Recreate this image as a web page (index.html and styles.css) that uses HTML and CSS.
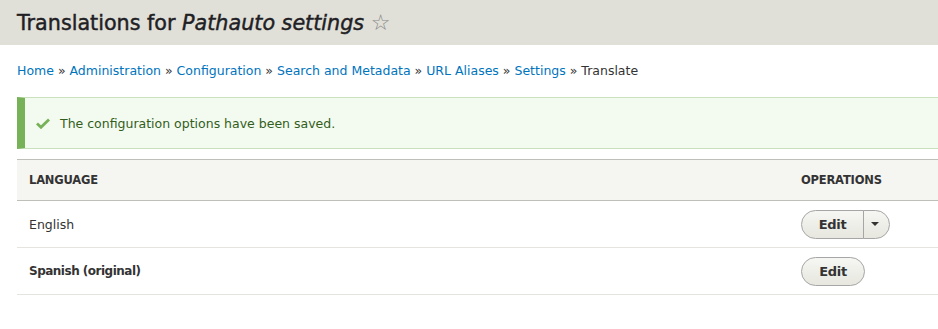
FILE: index.html
```html
<!DOCTYPE html>
<html lang="en">
<head>
<meta charset="utf-8">
<title>Translations for Pathauto settings</title>
<link rel="stylesheet" href="styles.css">
</head>
<body>
<header class="page-head">
  <h1 class="page-title">Translations for <em>Pathauto settings</em> <span class="star">☆</span></h1>
</header>
<main class="content">
  <nav class="breadcrumb">
    <a href="#">Home</a> » <a href="#">Administration</a> » <a href="#">Configuration</a> » <a href="#">Search and Metadata</a> » <a href="#">URL Aliases</a> » <a href="#">Settings</a> » Translate
  </nav>
  <div class="message">
    <svg class="check" width="14" height="11" viewBox="0 0 14 11"><path d="M1 5.5 L5 9.3 L13 1.5" fill="none" stroke="#77b259" stroke-width="2.8"/></svg>
    <span>The configuration options have been saved.</span>
  </div>
  <table class="langs">
    <thead>
      <tr><th class="col-lang">Language</th><th>Operations</th></tr>
    </thead>
    <tbody>
      <tr><td>English</td><td><div class="dropbutton"><a class="btn main" href="#">Edit</a><span class="toggle"><span class="caret"></span></span></div></td></tr>
      <tr><td class="orig">Spanish (original)</td><td><a class="btn single" href="#">Edit</a></td></tr>
    </tbody>
  </table>
</main>
</body>
</html>
```
FILE: styles.css
```css
html, body { margin: 0; padding: 0; overflow: hidden; }
body {
  font-family: "DejaVu Sans", Verdana, sans-serif;
  color: #222330;
  background: #fff;
  width: 938px;
}
.page-head {
  background: #e0e0d8;
  height: 45px;
  padding: 0 17px;
  box-sizing: border-box;
  display: flex;
  align-items: center;
}
.page-title {
  margin: 0 0 1px;
  font-size: 20.7px;
  font-weight: normal;
  color: #1f2024;
  -webkit-text-stroke: 0.45px #1f2024;
}
.page-title em { font-style: italic; }
.star { color: #888; font-size: 22px; -webkit-text-stroke: 0; }
.content {
  padding: 0 0 0 17px;
  width: 980px;
}
.breadcrumb {
  font-size: 12.5px;
  color: #333;
  margin-top: 18px;
  line-height: 16px;
}
.breadcrumb a { color: #0074bd; text-decoration: none; }
.message {
  margin-top: 18px;
  height: 52px;
  box-sizing: border-box;
  background: #f3faef;
  border: 1px solid #c9e1bd;
  border-left: 8px solid #77b259;
  display: flex;
  align-items: center;
  padding-left: 11px;
  gap: 10px;
  font-size: 12.5px;
  color: #325e1c;
}
.check { flex: none; }
.langs {
  margin-top: 10px;
  width: 980px;
  border-collapse: collapse;
  font-size: 12.5px;
}
.langs th {
  text-align: left;
  text-transform: uppercase;
  font-weight: bold;
  font-size: 11.5px;
  background: #f5f5f2;
  border-top: 1px solid #bfbfba;
  border-bottom: 1px solid #bfbfba;
  height: 40px;
  padding: 0 12px;
  color: #333;
  letter-spacing: -0.2px;
}
.langs th.col-lang { width: 748px; }
.langs td {
  height: 46px;
  border-bottom: 1px solid #e6e4df;
  padding: 0 12px;
  color: #333;
}
.langs td.orig { font-weight: bold; font-size: 12px; letter-spacing: -0.5px; }
.btn {
  display: inline-block;
  box-sizing: border-box;
  height: 29px;
  line-height: 27px;
  text-decoration: none;
  color: #333;
  font-weight: bold;
  font-size: 13px;
  letter-spacing: -0.3px;
  background: linear-gradient(to bottom, #f6f6f3, #e7e7df);
  border: 1px solid #a6a6a6;
}
.btn.single {
  width: 64px;
  text-align: center;
  border-radius: 20px;
}
.dropbutton { display: inline-flex; }
.btn.main {
  width: 63px;
  text-align: center;
  border-radius: 20px 0 0 20px;
}
.toggle {
  box-sizing: border-box;
  width: 27px;
  height: 29px;
  border: 1px solid #a6a6a6;
  border-radius: 0 20px 20px 0;
  background: linear-gradient(to bottom, #f6f6f3, #e7e7df);
  display: flex;
  align-items: center;
  justify-content: center;
  margin-left: -1px;
}
.caret {
  width: 0; height: 0;
  border-left: 4px solid transparent;
  border-right: 4px solid transparent;
  border-top: 4px solid #333;
  margin-left: -3px;
}
```
